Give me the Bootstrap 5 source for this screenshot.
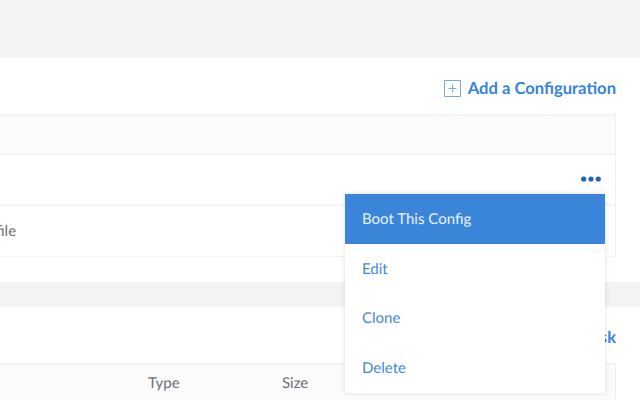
<!DOCTYPE html>
<html lang="en">
<head>
<meta charset="utf-8">
<meta name="viewport" content="width=device-width, initial-scale=1">
<title>Configurations</title>
<link href="https://cdn.jsdelivr.net/npm/bootstrap@5.3.0/dist/css/bootstrap.min.css" rel="stylesheet">
<style>
  body { font-family: Lato, "Liberation Sans", sans-serif; background: #f3f3f3; color: #6a6d71; font-size: 15px; line-height: 20px; height: 400px; padding-top: 58px; text-rendering: geometricPrecision; }
  .panel { background: #fff; height: 224px; padding-right: 24px; }
  .panel + .panel { margin-top: 25px; height: 93px; }
  .panel-head { height: 56px; padding-top: 4px; }
  .add-link { color: #3683dc; font-weight: 700; font-size: 16.6px; gap: 7px; }
  .add-link span { margin-top: -1px; }
  .grid-table { border-right: 1px solid #f0f0f0; border-top: 2px solid #f3f3f3; }
  .grid-head { background: #fbfbfb; height: 37px; padding-bottom: 1px; }
  .grid-row { border-top: 2px solid #f4f4f4; height: 51px; padding-bottom: 2px; }
  .grid-row.last { height: 53px; border-bottom: 1px solid #f3f3f3; padding-bottom: 0; }
  .file-cell { margin-left: -4px; }
  .type-cell { width: 134px; margin-left: 148px; }
  .action-btn { width: 20px; height: 6px; margin-right: 14px; }
  .action-menu { position: absolute; left: 345px; top: 194px; width: 260px; min-width: 0; border: 0; border-radius: 0; padding: 0; font-size: 15px; box-shadow: 0 0 5px rgba(0,0,0,.13); }
  .action-menu .dropdown-item { height: 49.75px; padding: 0 17px; color: #3f88dc; background: #fff; }
  .action-menu .dropdown-item.active { background: #3a85d9; color: #eaf3fd; }
</style>
<script src="https://cdn.jsdelivr.net/npm/bootstrap@5.3.0/dist/js/bootstrap.bundle.min.js"></script>
</head>
<body class="overflow-hidden">
<section class="panel">
  <div class="panel-head d-flex align-items-center justify-content-end">
    <a href="#" class="add-link d-flex align-items-center text-decoration-none">
      <svg width="17" height="17" viewBox="0 0 17 17" fill="none" stroke="#74aae8"><path d="M.5.5h16v16H.5zM8.5 4.5v8M4.5 8.5h8"/></svg>
      <span>Add a Configuration</span>
    </a>
  </div>
  <div class="grid-table">
    <div class="grid-head"></div>
    <div class="grid-row d-flex align-items-center justify-content-end">
      <svg class="action-btn" viewBox="0 0 20 6" fill="#1f64b6"><circle cx="2.7" cy="3" r="2.6"/><circle cx="10" cy="3" r="2.6"/><circle cx="17.3" cy="3" r="2.6"/></svg>
    </div>
    <div class="grid-row last d-flex align-items-center"><span class="file-cell">file</span></div>
  </div>
</section>
<section class="panel">
  <div class="panel-head d-flex align-items-center justify-content-end">
    <a href="#" class="add-link text-decoration-none"><span>Add a Disk</span></a>
  </div>
  <div class="grid-table">
    <div class="grid-head d-flex align-items-center">
      <span class="type-cell">Type</span><span>Size</span>
    </div>
  </div>
</section>
<div class="dropdown-menu action-menu show">
  <a class="dropdown-item active d-flex align-items-center" href="#">Boot This Config</a>
  <a class="dropdown-item d-flex align-items-center" href="#">Edit</a>
  <a class="dropdown-item d-flex align-items-center" href="#">Clone</a>
  <a class="dropdown-item d-flex align-items-center" href="#">Delete</a>
</div>
</body>
</html>
